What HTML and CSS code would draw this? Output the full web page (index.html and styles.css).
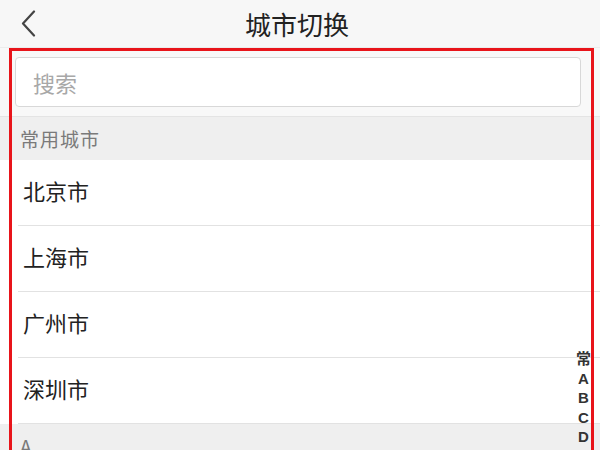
FILE: index.html
```html
<!DOCTYPE html>
<html lang="zh-CN">
<head>
<meta charset="utf-8">
<link rel="stylesheet" href="styles.css">
</head>
<body>
<div class="page">
  <header class="header">
    <div class="back">
      <svg width="16" height="28" viewBox="0 0 16 28"><path d="M13 1.5 L2 13.5 L13 25.5" fill="none" stroke="#444" stroke-width="2.2" stroke-linecap="round" stroke-linejoin="round"/></svg>
    </div>
    <div class="title">城市切换</div>
    <div class="spacer"></div>
  </header>
  <div class="search-wrap">
    <div class="search">搜索</div>
  </div>
  <div class="section">常用城市</div>
  <ul class="list">
    <li class="row"><span class="row-in">北京市</span></li>
    <li class="row"><span class="row-in">上海市</span></li>
    <li class="row"><span class="row-in">广州市</span></li>
    <li class="row"><span class="row-in">深圳市</span></li>
  </ul>
  <div class="section">A</div>
  <ul class="index">
    <li>常</li><li>A</li><li>B</li><li>C</li><li>D</li>
  </ul>
  <div class="mark"></div>
</div>
</body>
</html>
```
FILE: styles.css
```css
html, body {
  margin: 0;
  padding: 0;
  background: #fff;
}
body {
  font-family: "Noto Sans CJK SC", "Noto Sans", sans-serif;
  color: #222;
}
.page {
  position: relative;
  width: 600px;
  height: 450px;
  overflow: hidden;
}
.header {
  height: 47px;
  background: #f7f7f7;
  border-bottom: 1px solid #ececec;
  display: grid;
  grid-template-columns: 60px 1fr 66px;
  align-items: center;
}
.back {
  display: flex;
  align-items: center;
  padding-left: 21px;
  height: 47px;
}
.title {
  text-align: center;
  font-size: 26px;
  color: #222;
  line-height: 45px;
}
.search-wrap {
  background: #f8f8f8;
  padding: 9px 19px 9px 15px;
  border-bottom: 1px solid #e4e4e4;
}
.search {
  height: 48px;
  background: #fff;
  border: 1px solid #d8d8d8;
  border-radius: 4px;
  font-size: 22px;
  color: #a8a8a8;
  line-height: 48px;
  padding-left: 17px;
}
.section {
  height: 43px;
  background: #efefef;
  color: #7a7a7a;
  font-size: 19px;
  line-height: 43px;
  padding-left: 20px;
  letter-spacing: 1px;
}
.list {
  list-style: none;
  margin: 0;
  padding: 0;
}
.row {
  height: 66px;
  padding-left: 18px;
}
.row-in {
  display: block;
  height: 65px;
  line-height: 61px;
  border-bottom: 1px solid #e2e2e2;
  padding-left: 5px;
  font-size: 22px;
  color: #222;
}
.index {
  position: absolute;
  right: 9px;
  top: 349px;
  margin: 0;
  padding: 0;
  list-style: none;
  font-family: "Liberation Sans", "Noto Sans CJK SC", sans-serif;
  font-weight: bold;
  font-size: 15px;
  line-height: 19.6px;
  color: #333;
  text-align: center;
}
.mark {
  position: absolute;
  left: 9px;
  top: 48px;
  width: 579px;
  height: 420px;
  border: 3px solid #e8141a;
  pointer-events: none;
}
```
